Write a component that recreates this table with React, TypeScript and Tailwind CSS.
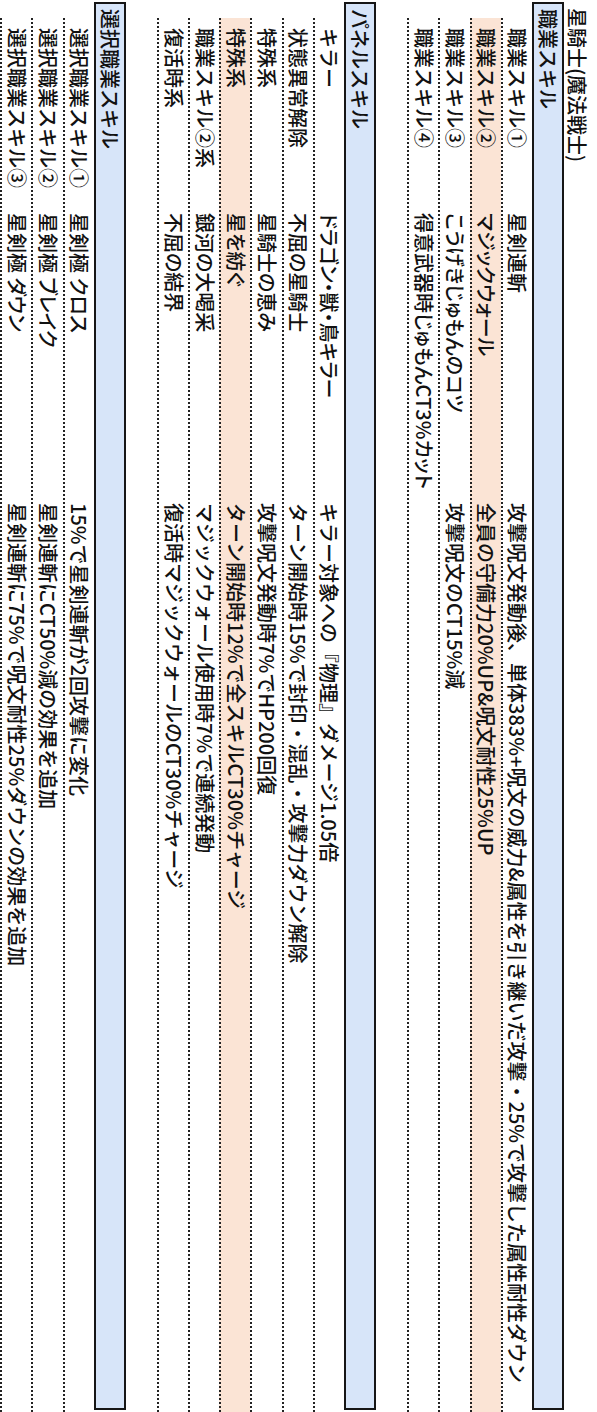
type SkillRow = {
  name: string
  skill: string
  effect: string
  highlight?: boolean
}

type Section = {
  title: string
  rows: SkillRow[]
}

const sections: Section[] = [
  {
    title: '職業スキル',
    rows: [
      {
        name: '職業スキル①',
        skill: '星剣連斬',
        effect: '攻撃呪文発動後、単体383%+呪文の威力&属性を引き継いだ攻撃・25%で攻撃した属性耐性ダウン',
      },
      {
        name: '職業スキル②',
        skill: 'マジックウォール',
        effect: '全員の守備力20%UP&呪文耐性25%UP',
        highlight: true,
      },
      { name: '職業スキル③', skill: 'こうげきじゅもんのコツ', effect: '攻撃呪文のCT15%減' },
      { name: '職業スキル④', skill: '得意武器時じゅもんCT3%カット', effect: '' },
    ],
  },
  {
    title: 'パネルスキル',
    rows: [
      { name: 'キラー', skill: 'ドラゴン・獣・鳥キラー', effect: 'キラー対象への『物理』ダメージ1.05倍' },
      { name: '状態異常解除', skill: '不屈の星騎士', effect: 'ターン開始時15%で封印・混乱・攻撃力ダウン解除' },
      { name: '特殊系', skill: '星騎士の恵み', effect: '攻撃呪文発動時7%でHP200回復' },
      { name: '特殊系', skill: '星を紡ぐ', effect: 'ターン開始時12%で全スキルCT30%チャージ', highlight: true },
      { name: '職業スキル②系', skill: '銀河の大喝采', effect: 'マジックウォール使用時7%で連続発動' },
      { name: '復活時系', skill: '不屈の結界', effect: '復活時マジックウォールのCT30%チャージ' },
    ],
  },
  {
    title: '選択職業スキル',
    rows: [
      { name: '選択職業スキル①', skill: '星剣極 クロス', effect: '15%で星剣連斬が2回攻撃に変化' },
      { name: '選択職業スキル②', skill: '星剣極 ブレイク', effect: '星剣連斬にCT50%減の効果を追加' },
      { name: '選択職業スキル③', skill: '星剣極 ダウン', effect: '星剣連斬に75%で呪文耐性25%ダウンの効果を追加' },
    ],
  },
]

function Row({ row }: { row: SkillRow }) {
  return (
    <div
      className={`ml-[18px] flex h-[31.2px] shrink-0 items-center whitespace-nowrap border-b-2 border-dotted border-[#222] ${
        row.highlight ? 'bg-[#fbe4d5]' : ''
      }`}
    >
      <div className="w-[195px] shrink-0 pl-[10px]">{row.name}</div>
      {/* skill names use proportional kana, effects don't */}
      <div className="w-[290px] shrink-0 [font-feature-settings:'palt']">{row.skill}</div>
      <div className="flex-1">{row.effect}</div>
    </div>
  )
}

function SectionBlock({ section }: { section: Section }) {
  return (
    <section className="flex flex-col">
      <header className="mx-[2px] flex h-[32px] shrink-0 items-center border-2 border-[#161616] bg-[#d7e5f9] pl-[5px]">
        <h3>{section.title}</h3>
      </header>
      {section.rows.map((row, i) => (
        <Row key={i} row={row} />
      ))}
    </section>
  )
}

export default function App() {
  return (
    <div className="h-[1412px] w-[597px] overflow-hidden bg-white">
      {/* the sheet is photographed sideways, so lay it out flat and turn it a quarter clockwise */}
      <div className="h-[597px] w-[1412px] origin-top-left translate-x-[597px] rotate-90 font-['Noto_Sans_CJK_JP','Noto_Sans',sans-serif] text-[20px] font-medium leading-[26px] text-[#111]">
        <div className="flex h-[33px] items-center pl-[8px] pt-[6px]">
          <h2>星騎士(魔法戦士)</h2>
        </div>
        <div className="flex flex-col gap-[31.2px]">
          {sections.map((section) => (
            <SectionBlock key={section.title} section={section} />
          ))}
        </div>
      </div>
    </div>
  )
}
